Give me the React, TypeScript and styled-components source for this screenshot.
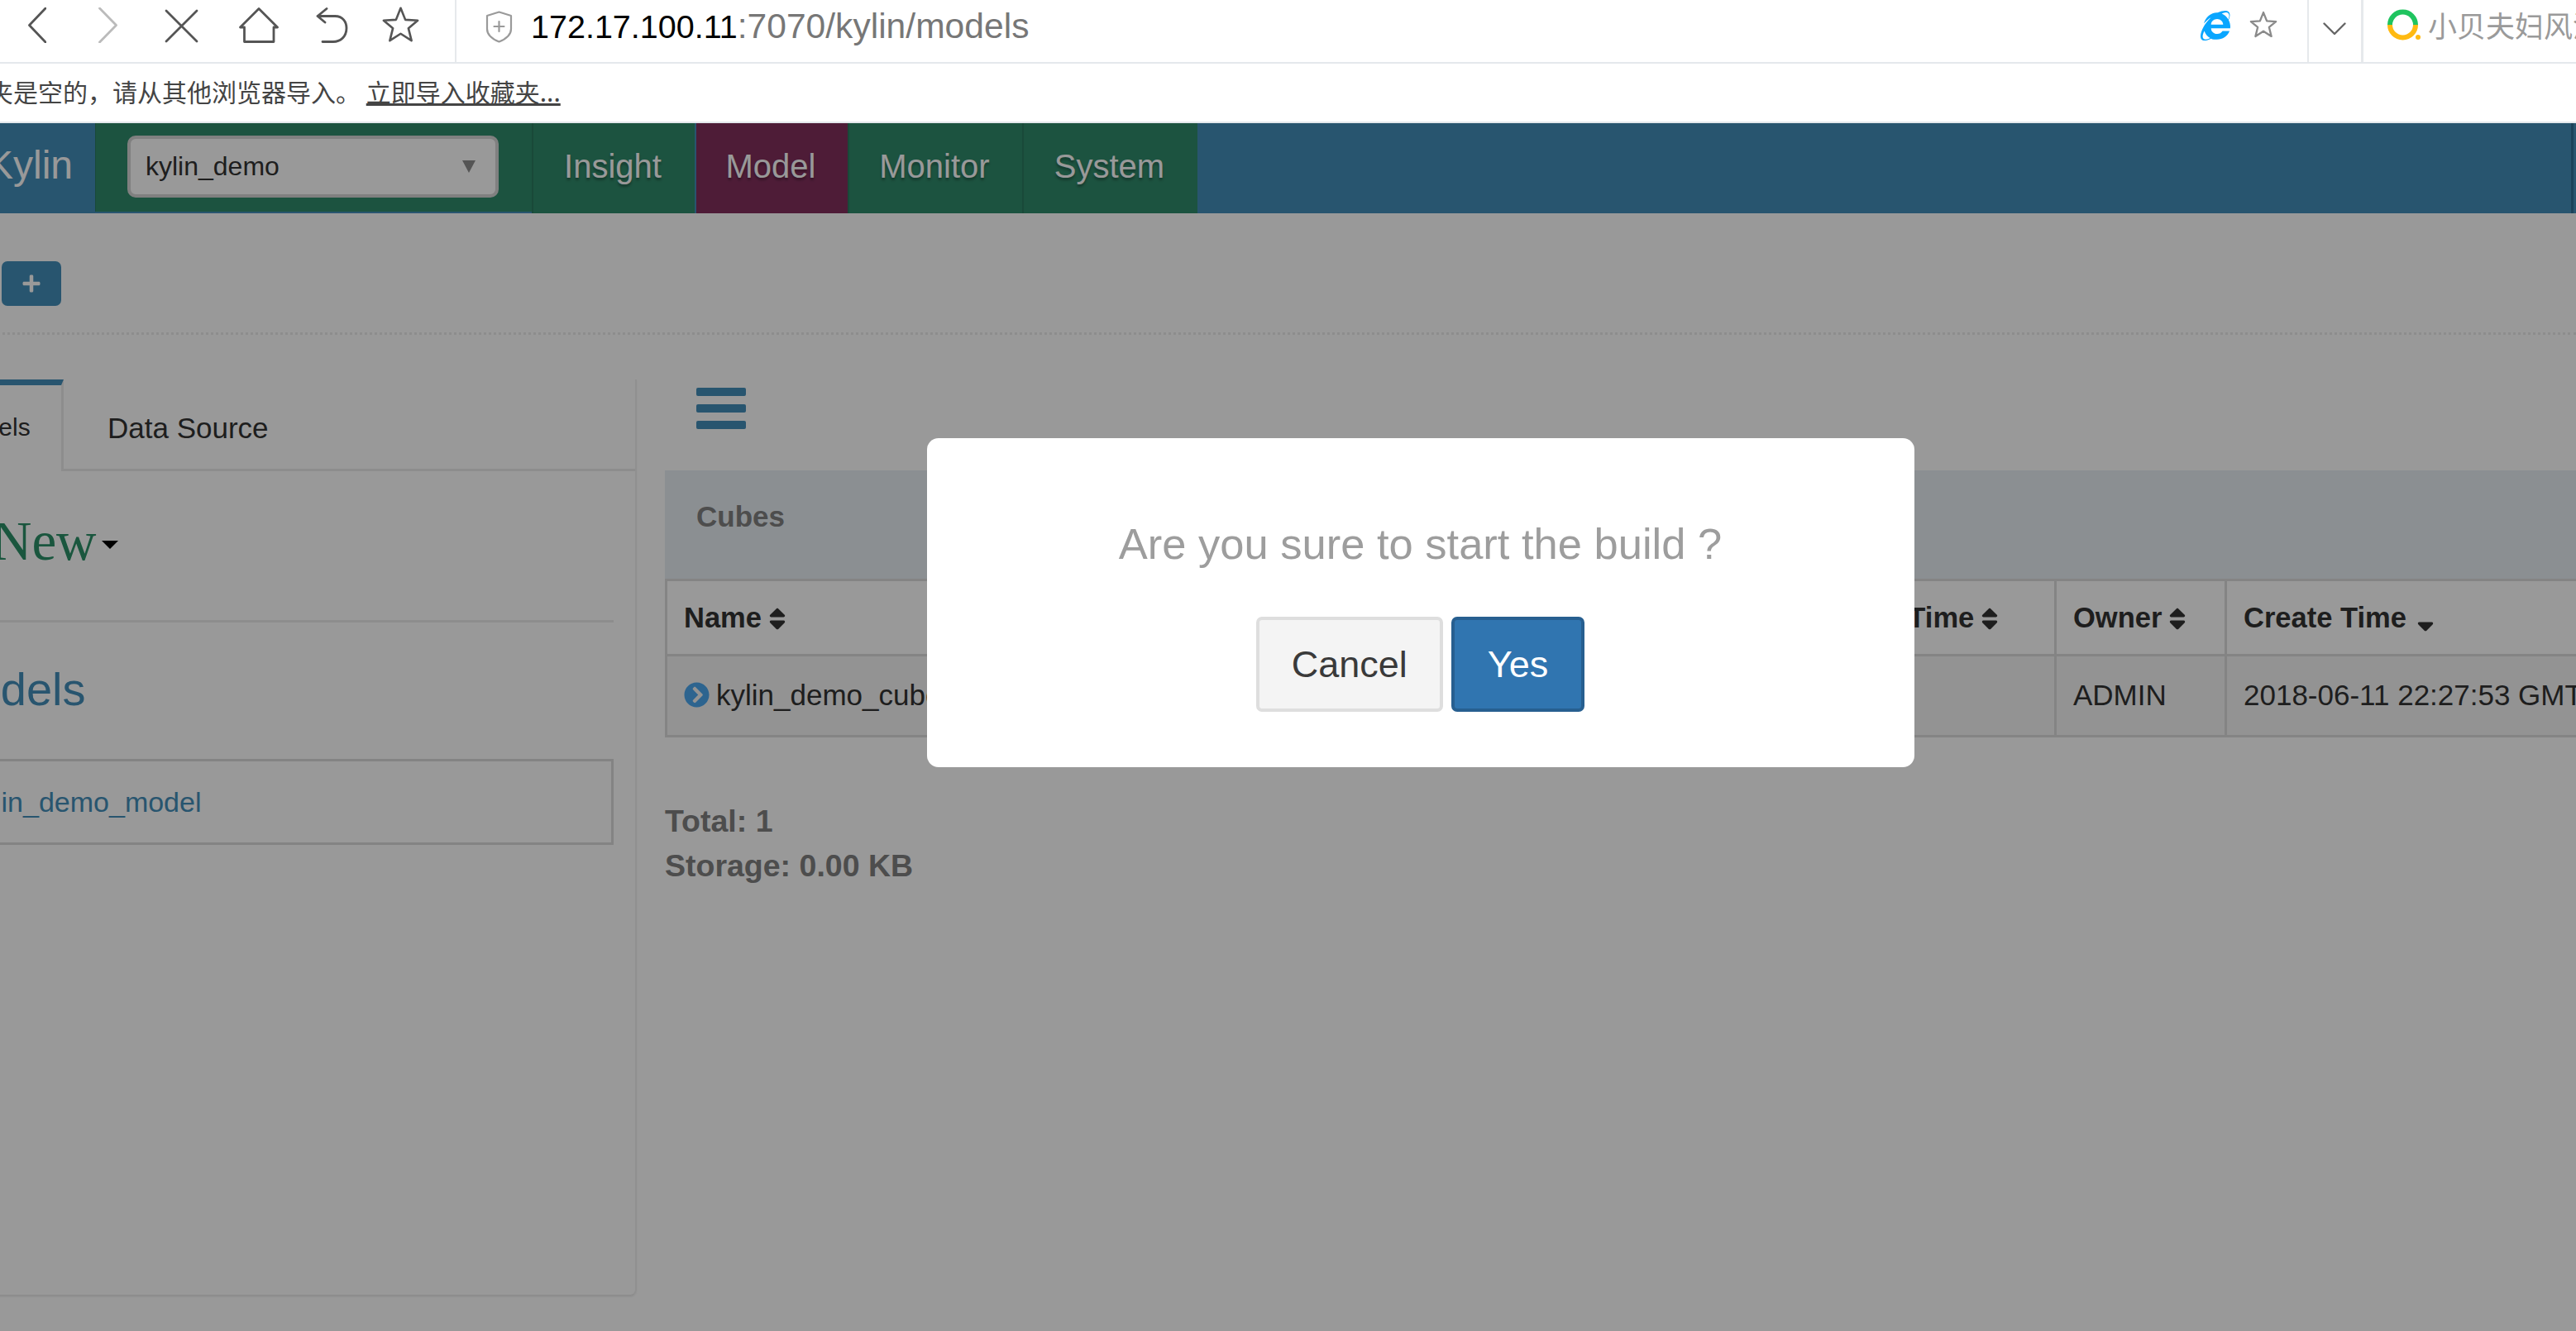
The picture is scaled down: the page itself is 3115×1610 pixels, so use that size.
import React from "react";
import styled, { createGlobalStyle } from "styled-components";
import { FaChevronCircleRight, FaInternetExplorer, FaPlus, FaSort, FaSortDown } from "react-icons/fa";

const GlobalStyle = createGlobalStyle`
  html, body {
    margin: 0;
    padding: 0;
    width: 3115px;
    height: 1610px;
    overflow: hidden;
    background: #fff;
    font-family: "Liberation Sans", Arial, sans-serif;
  }
  * { box-sizing: border-box; }
`;

const Window = styled.div`
  width: 3115px;
  height: 1610px;
  overflow: hidden;
  display: flex;
  flex-direction: column;
`;

/* browser chrome */

const Toolbar = styled.div`
  height: 77px;
  flex: none;
  display: flex;
  align-items: flex-start;
  border-bottom: 2px solid #e4e8ec;
  background: #fff;
  overflow: hidden;
`;

const Glyph = styled.svg<{ $left: number; $top: number }>`
  flex: none;
  margin-left: ${p => p.$left}px;
  margin-top: ${p => p.$top}px;
  display: block;
`;

const ToolbarSeparator = styled.div<{ $left: number; $width?: number }>`
  flex: none;
  height: 75px;
  width: ${p => p.$width || 2}px;
  margin-left: ${p => p.$left}px;
  background: #e6e9ec;
`;

const Address = styled.div`
  flex: none;
  margin-left: 22px;
  line-height: 62px;
  font-size: 42.6px;
  color: #777;
  white-space: nowrap;
  width: 1990px;
`;

const Host = styled.span`
  color: #000;
  font-size: 39.5px;
`;

const IeIcon = styled(FaInternetExplorer)`
  flex: none;
  margin-left: 29px;
  margin-top: 12px;
  width: 36px;
  height: 38px;
  color: #0aa6ff;
`;

const TabTitle = styled.div`
  flex: none;
  margin-left: 8px;
  line-height: 60px;
  font-size: 35px;
  color: #9a9a9a;
  white-space: nowrap;
  font-family: "Noto Sans CJK SC", sans-serif;
`;

const FavoritesBar = styled.div`
  height: 72px;
  flex: none;
  border-bottom: 2px solid #e4e8ec;
  background: #fff;
  overflow: hidden;
`;

const FavoritesText = styled.div`
  margin-left: -74px;
  line-height: 66px;
  font-size: 30px;
  color: #444;
  white-space: nowrap;
  font-family: "Noto Sans CJK SC", sans-serif;
`;

const FavoritesLink = styled.span`
  text-decoration: underline;
`;

/* web page, scrolled sideways by 100px */

const Viewport = styled.div`
  position: relative;
  flex: 1;
  overflow: hidden;
  background: #fff;
`;

const Page = styled.div`
  margin-left: -100px;
  width: 3215px;
  height: 1461px;
  display: flex;
  flex-direction: column;
`;

const NavBar = styled.div`
  height: 109px;
  flex: none;
  display: flex;
  background: #448eb9;
`;

const Logo = styled.div`
  width: 215px;
  padding-right: 27px;
  text-align: right;
  line-height: 102px;
  font-size: 48px;
  color: #fff;
`;

const ProjectCell = styled.div`
  width: 528px;
  height: 107px;
  padding-left: 38px;
  padding-top: 15px;
  background: #308a6b;
  border-left: 1px solid #2a7a5f;
`;

const ProjectSelect = styled.div`
  width: 449px;
  height: 75px;
  display: flex;
  align-items: center;
  justify-content: space-between;
  padding: 0 24px 0 18px;
  background: #fff;
  border: 4px solid #d5d5d5;
  border-radius: 10px;
  font-size: 32px;
  color: #333;
`;

const SelectArrow = styled.div`
  width: 0;
  height: 0;
  border-left: 8px solid transparent;
  border-right: 8px solid transparent;
  border-top: 15px solid #8e8e8e;
`;

const NavItem = styled.div<{ $width: number; $active?: boolean }>`
  width: ${p => p.$width}px;
  padding-right: 3px;
  text-align: center;
  line-height: 105px;
  font-size: 40px;
  color: #fff;
  text-shadow: 0 3px 3px rgba(0, 0, 0, 0.3);
  background: ${p => (p.$active ? "#82305d" : "#308a6b")};
  border-left: 2px solid ${p => (p.$active ? "#448eb9" : "#2a7a5f")};
`;

const NavEdge = styled.div`
  width: 3px;
  margin-left: auto;
  margin-right: 3px;
  background: #2f6f95;
`;

const ActionRow = styled.div`
  height: 147px;
  flex: none;
  padding: 58px 0 0 102px;
  border-bottom: 3px dotted #ececec;
`;

const AddButton = styled.div`
  width: 72px;
  height: 54px;
  display: flex;
  align-items: center;
  justify-content: center;
  border-radius: 7px;
  background: #448eb9;
  color: #fff;
  font-size: 24px;
`;

const Columns = styled.div`
  flex: 1;
  display: flex;
  padding-top: 54px;
  min-height: 0;
`;

const SideColumn = styled.div`
  width: 870px;
  height: 1109px;
  flex: none;
  border-right: 2px solid #f0f0f0;
  border-bottom: 2px solid #ececec;
  border-bottom-right-radius: 8px;
  box-shadow: 0 1px 2px rgba(0, 0, 0, 0.06);
`;

const TabStrip = styled.div`
  height: 111px;
  display: flex;
  border-bottom: 3px solid #ececec;
`;

const ActiveTab = styled.div`
  width: 177px;
  height: 111px;
  padding-left: 40px;
  border-top: 7px solid #448eb9;
  border-right: 3px solid #ececec;
  background: #fff;
  line-height: 102px;
  font-size: 30px;
  color: #333;
`;

const Tab = styled.div`
  padding-left: 53px;
  line-height: 118px;
  font-size: 35px;
  color: #333;
`;

const NewRow = styled.div`
  height: 180px;
  display: flex;
  align-items: center;
  padding: 0 0 12px 90px;
  font-family: "Liberation Serif", "Times New Roman", serif;
  font-size: 67px;
  color: #2c9068;
`;

const Caret = styled.span`
  width: 0;
  height: 0;
  margin: 10px 0 0 6px;
  border-left: 10px solid transparent;
  border-right: 10px solid transparent;
  border-top: 10px solid #000;
`;

const Divider = styled.div`
  height: 3px;
  margin-right: 26px;
  background: #ececec;
`;

const SideTitle = styled.div`
  height: 165px;
  display: flex;
  align-items: center;
  padding: 0 0 4px 23px;
  font-size: 56px;
  color: #448eb9;
`;

const ModelBox = styled.div`
  height: 104px;
  margin-right: 26px;
  padding-left: 60px;
  border: 3px solid #dadada;
  border-left: none;
  line-height: 98px;
  font-size: 34px;
  color: #448eb9;
`;

const MainColumn = styled.div`
  flex: 1;
  min-width: 0;
  padding-left: 34px;
`;

const MenuIcon = styled.div`
  width: 60px;
  margin: 10px 0 50px 38px;
  display: flex;
  flex-direction: column;
  gap: 10px;
`;

const MenuBar = styled.div`
  height: 10px;
  border-radius: 2px;
  background: #448eb9;
`;

const PanelHeading = styled.div`
  height: 131px;
  display: flex;
  align-items: center;
  padding: 0 0 20px 38px;
  background: #e8eef3;
  font-size: 35px;
  font-weight: 700;
  color: #808080;
`;

const CubeTable = styled.table`
  width: 2400px;
  table-layout: fixed;
  border-collapse: collapse;
  font-size: 34.5px;
  color: #333;
`;

const HeadCell = styled.th<{ $width: number }>`
  width: ${p => p.$width}px;
  height: 91px;
  padding: 0 0 0 20px;
  border: 3px solid #dcdcdc;
  text-align: left;
  font-weight: 700;
  white-space: nowrap;
  overflow: hidden;
`;

const BodyCell = styled.td`
  height: 98px;
  padding: 0 0 2px 20px;
  border: 3px solid #dcdcdc;
  background: #f5f5f5;
  font-size: 35px;
  white-space: nowrap;
  overflow: hidden;
`;

const SortIcon = styled(FaSort)`
  margin-left: 8px;
  width: 22px;
  height: 33px;
  vertical-align: -6px;
`;

const SortedIcon = styled(FaSortDown)`
  margin-left: 12px;
  width: 22px;
  height: 33px;
  vertical-align: -8px;
`;

const RowToggle = styled(FaChevronCircleRight)`
  margin-right: 8px;
  width: 31px;
  height: 31px;
  vertical-align: -3px;
  color: #4ba7ee;
`;

const Stats = styled.div`
  margin-top: 74px;
  line-height: 54px;
  font-size: 37.5px;
  font-weight: 700;
  color: #808080;
`;

/* modal */

const Backdrop = styled.div`
  position: absolute;
  inset: 0;
  display: flex;
  justify-content: center;
  align-items: flex-start;
  padding: 381px 0 0 320px;
  background: rgba(0, 0, 0, 0.4);
`;

const Dialog = styled.div`
  width: 1194px;
  height: 398px;
  display: flex;
  flex-direction: column;
  align-items: center;
  border-radius: 14px;
  background: #fff;
`;

const DialogText = styled.div`
  margin-top: 96px;
  line-height: 64px;
  font-size: 52.5px;
  color: #9d9d9d;
`;

const DialogButtons = styled.div`
  margin-top: 56px;
  display: flex;
  gap: 10px;
`;

const DialogButton = styled.button<{ $primary?: boolean }>`
  height: 115px;
  padding: 0 ${p => (p.$primary ? 40 : 39)}px;
  border-radius: 7px;
  border: 4px solid ${p => (p.$primary ? "#275f90" : "#dedede")};
  background: ${p => (p.$primary ? "#3075b0" : "#f4f4f4")};
  color: ${p => (p.$primary ? "#fff" : "#3a3a3a")};
  font-family: inherit;
  font-size: 45px;
`;

const Stroke = { fill: "none", strokeLinecap: "round", strokeLinejoin: "round" } as const;

const STAR = "12,1.5 15,9 23,9.5 17,14.5 19,22.5 12,18 5,22.5 7,14.5 1,9.5 9,9";

const BrowserToolbar: React.FC = () => (
  <Toolbar>
    <Glyph $left={34} $top={9} width={22} height={43} viewBox="0 0 22 43" {...Stroke} stroke="#555" strokeWidth={2.8}>
      <path d="M21 1 L1.5 21.5 L21 42" />
    </Glyph>
    <Glyph $left={63} $top={9} width={23} height={43} viewBox="0 0 23 43" {...Stroke} stroke="#bbb" strokeWidth={2.8}>
      <path d="M1.5 1 L21.5 21.5 L1.5 42" />
    </Glyph>
    <Glyph $left={57} $top={11} width={41} height={41} viewBox="0 0 41 41" {...Stroke} stroke="#555" strokeWidth={2.8}>
      <path d="M2 2 L39 39 M39 2 L2 39" />
    </Glyph>
    <Glyph $left={49} $top={9} width={48} height={43} viewBox="0 0 48 43" {...Stroke} stroke="#555" strokeWidth={2.8}>
      <path d="M1.5 24 L24 1.5 L46.5 24 H42 V41.5 H6.5 V24 Z" />
    </Glyph>
    <Glyph $left={44} $top={9} width={40} height={43} viewBox="0 0 40 43" {...Stroke} stroke="#555" strokeWidth={2.8}>
      <path d="M14 1.5 L3 10.5 L12 18 M3 10.5 H24 C34 10.5 38 18 38 25 C38 36 30 41.5 22 41.5 H9" />
    </Glyph>
    <Glyph $left={40} $top={7} width={47} height={45} viewBox="0 0 24 24" {...Stroke} stroke="#555" strokeWidth={1.4}>
      <polygon points={STAR} />
    </Glyph>
    <ToolbarSeparator $left={42} />
    <Glyph $left={35} $top={13} width={33} height={39} viewBox="0 0 33 39" {...Stroke} stroke="#9a9a9a" strokeWidth={2.2}>
      <path d="M16.5 1.5 L31 6 V22 C31 30 24 34.5 16.5 37.5 C9 34.5 2 30 2 22 V6 Z M16.5 13 V25 M10.5 19 H22.5" />
    </Glyph>
    <Address>
      <Host>172.17.100.11</Host>:7070/kylin/models
    </Address>
    <IeIcon />
    <Glyph $left={23} $top={13} width={34} height={33} viewBox="0 0 24 24" {...Stroke} stroke="#8a8a8a" strokeWidth={1.7}>
      <polygon points={STAR} />
    </Glyph>
    <ToolbarSeparator $left={36} />
    <Glyph $left={17} $top={27} width={28} height={16} viewBox="0 0 28 16" {...Stroke} stroke="#666" strokeWidth={2.4}>
      <path d="M1.5 1.5 L14 14 L26.5 1.5" />
    </Glyph>
    <ToolbarSeparator $left={18} $width={3} />
    <Glyph $left={29} $top={11} width={41} height={38} viewBox="0 0 41 38" fill="none" strokeWidth={6}>
      <path d="M3 19 A15.5 15.5 0 0 1 34 19" stroke="#1fc45f" />
      <path d="M3 19 A15.5 15.5 0 0 0 34 19" stroke="#ffba12" />
      <circle cx={37} cy={34} r={3} fill="#ffba12" stroke="none" />
    </Glyph>
    <TabTitle>小贝夫妇风波</TabTitle>
  </Toolbar>
);

const App: React.FC = () => (
  <React.Fragment>
    <GlobalStyle />
    <Window>
      <BrowserToolbar />
      <FavoritesBar>
        <FavoritesText>
          收藏夹是空的，请从其他浏览器导入。 <FavoritesLink>立即导入收藏夹...</FavoritesLink>
        </FavoritesText>
      </FavoritesBar>
      <Viewport>
        <Page>
          <NavBar>
            <Logo>Kylin</Logo>
            <ProjectCell>
              <ProjectSelect>
                kylin_demo
                <SelectArrow />
              </ProjectSelect>
            </ProjectCell>
            <NavItem $width={197}>Insight</NavItem>
            <NavItem $width={185} $active>
              Model
            </NavItem>
            <NavItem $width={211}>Monitor</NavItem>
            <NavItem $width={212}>System</NavItem>
            <NavEdge />
          </NavBar>
          <ActionRow>
            <AddButton>
              <FaPlus />
            </AddButton>
          </ActionRow>
          <Columns>
            <SideColumn>
              <TabStrip>
                <ActiveTab>Models</ActiveTab>
                <Tab>Data Source</Tab>
              </TabStrip>
              <NewRow>
                New
                <Caret />
              </NewRow>
              <Divider />
              <SideTitle>Models</SideTitle>
              <ModelBox>kylin_demo_model</ModelBox>
            </SideColumn>
            <MainColumn>
              <MenuIcon>
                <MenuBar />
                <MenuBar />
                <MenuBar />
              </MenuIcon>
              <PanelHeading>Cubes</PanelHeading>
              <CubeTable>
                <thead>
                  <tr>
                    <HeadCell $width={1304}>
                      Name
                      <SortIcon />
                    </HeadCell>
                    <HeadCell $width={376}>
                      Last Build Time
                      <SortIcon />
                    </HeadCell>
                    <HeadCell $width={206}>
                      Owner
                      <SortIcon />
                    </HeadCell>
                    <HeadCell $width={514}>
                      Create Time
                      <SortedIcon />
                    </HeadCell>
                  </tr>
                </thead>
                <tbody>
                  <tr>
                    <BodyCell>
                      <RowToggle />
                      kylin_demo_cube
                    </BodyCell>
                    <BodyCell />
                    <BodyCell>ADMIN</BodyCell>
                    <BodyCell>2018-06-11 22:27:53 GMT+8</BodyCell>
                  </tr>
                </tbody>
              </CubeTable>
              <Stats>
                <div>Total: 1</div>
                <div>Storage: 0.00 KB</div>
              </Stats>
            </MainColumn>
          </Columns>
        </Page>
        <Backdrop>
          <Dialog>
            <DialogText>Are you sure to start the build ?</DialogText>
            <DialogButtons>
              <DialogButton>Cancel</DialogButton>
              <DialogButton $primary>Yes</DialogButton>
            </DialogButtons>
          </Dialog>
        </Backdrop>
      </Viewport>
    </Window>
  </React.Fragment>
);

export default App;
